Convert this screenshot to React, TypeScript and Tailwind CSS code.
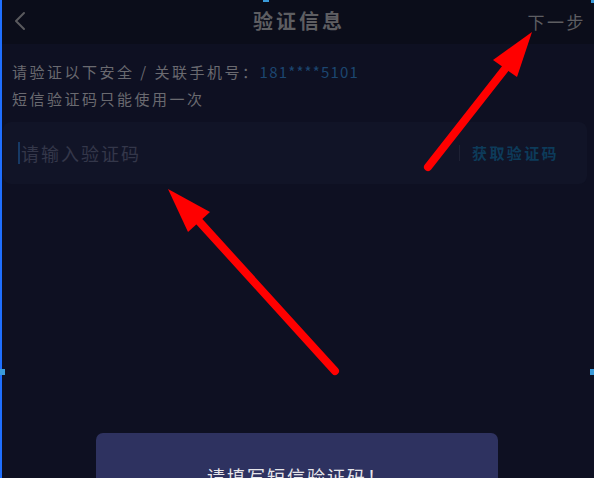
import React from "react";

export default function App() {
  const font = { fontFamily: '"Noto Sans CJK SC", "Noto Sans", sans-serif' };
  return (
    <div
      className="relative w-[594px] h-[478px] overflow-hidden bg-[#0e1022]"
      style={font}
    >
      {/* header */}
      <div className="relative h-[44px] bg-[#0b0d1a] flex items-center justify-between pl-[14px] pr-[8px]">
        <svg width="12" height="20" viewBox="0 0 12 20" className="mt-[-2px]">
          <path d="M10 2 L2 10 L10 18" fill="none" stroke="#5a5a5e" strokeWidth="2" strokeLinecap="round" strokeLinejoin="round" />
        </svg>
        <div className="absolute left-0 right-0 top-0 h-[44px] flex items-center justify-center pointer-events-none">
          <span className="text-[20px] font-bold tracking-[3px] text-[#5e5e62] leading-none mt-[-2px] pl-[4px]">验证信息</span>
        </div>
        <span className="text-[17px] tracking-[2.5px] text-[#5e5e62] leading-none mt-[-2px]">下一步</span>
      </div>

      {/* info */}
      <div className="pl-[12px] pt-[14px] text-[15px] tracking-[2.5px] leading-[27px] text-[#6a6a70]">
        <div>
          请验证以下安全 / 关联手机号：<span className="text-[#1c4670] tracking-[1.2px]">181****5101</span>
        </div>
        <div>短信验证码只能使用一次</div>
      </div>

      {/* input */}
      <div className="mx-[3px] mt-[10px] w-[584px] h-[62px] rounded-[8px] bg-[#111427] flex items-center pl-[15px] pr-[28px]">
        <div className="w-[2px] h-[22px] bg-[#173a66] mr-[1px]" />
        <span className="flex-1 text-[18px] tracking-[2px] text-[#34374a]">请输入验证码</span>
        <div className="w-[1px] h-[16px] bg-[#1e2134] mr-[12px]" />
        <span className="text-[15px] font-bold tracking-[2.4px] text-[#0d3b5a]">获取验证码</span>
      </div>

      {/* toast */}
      <div className="absolute left-[96px] top-[433px] w-[402px] h-[86px] rounded-[7px] bg-[#2e3260] flex items-center justify-center">
        <span className="text-[18px] tracking-[2px] text-[#e6e6ea]">请填写短信验证码！</span>
      </div>

      {/* annotation arrows */}
      <svg className="absolute left-0 top-0 pointer-events-none" width="594" height="478" viewBox="0 0 594 478">
        <line x1="428" y1="167" x2="512" y2="60" stroke="#ff0000" strokeWidth="8" strokeLinecap="round" />
        <polygon points="532,32 493,60 517,77" fill="#ff0000" />
        <line x1="335" y1="371" x2="196" y2="218" stroke="#ff0000" strokeWidth="8" strokeLinecap="round" />
        <polygon points="168,189 210,212 188,232" fill="#ff0000" />
      </svg>

      {/* selection frame */}
      <div className="absolute left-0 top-0 w-[2px] h-[478px] bg-[#1f6fff]" />
      <div className="absolute left-0 top-[369px] w-[5px] h-[6px] bg-[#3a9ad9]" />
      <div className="absolute right-0 top-[369px] w-[4px] h-[6px] bg-[#3a9ad9]" />
      <div className="absolute left-[263px] top-0 w-[6px] h-[2px] bg-[#3a9ad9]" />
      <div className="absolute right-0 top-0 w-[3px] h-[3px] bg-[#3a9ad9]" />
    </div>
  );
}
